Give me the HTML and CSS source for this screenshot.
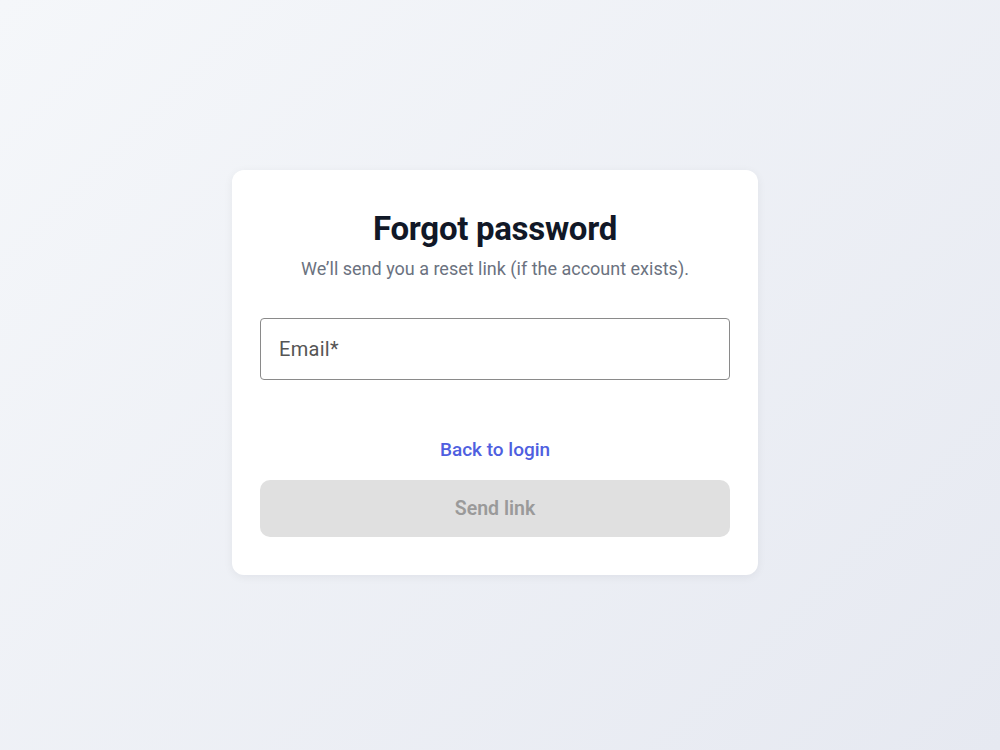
FILE: index.html
```html
<!DOCTYPE html>
<html lang="en">
<head>
  <meta charset="UTF-8" />
  <meta name="viewport" content="width=device-width, initial-scale=1.0"/>
  <title>Forgot password</title>
  <link rel="stylesheet" href="styles.css">
</head>
<body>
  <div class="card">
    <h1>Forgot password</h1>
    <p class="subtitle">We’ll send you a reset link (if the account exists).</p>

    <div class="field">
      <input type="email" id="email" placeholder="Email*" />
    </div>

    <a class="back" href="#">Back to login</a>

    <button class="send" disabled>Send link</button>
  </div>
</body>
</html>
```

FILE: styles.css
```css
:root {
  --card-bg: #ffffff;
  --title: #111827;
  --muted: #6b7280;
  --link: #4f5fe0;
  --input-border: #8a8a8a;
  --disabled-bg: #e0e0e0;
  --disabled-text: #9a9a9a;
}

body {
  font-family: Roboto, "Noto Sans", Arial, sans-serif;
  background: linear-gradient(135deg, #f5f7fa 0%, #e6e9f1 100%);
  margin: 0;
  padding: 0 10px 0 0;
  min-height: 100vh;
  display: flex;
  justify-content: center;
  align-items: flex-start;
}

.card {
  background-color: var(--card-bg);
  width: 526px;
  box-sizing: border-box;
  margin-top: 170px;
  padding: 40px 28px 38px;
  border-radius: 12px;
  box-shadow: 0 2px 10px rgba(15, 23, 42, 0.06);
  display: flex;
  flex-direction: column;
}

h1 {
  margin: 0;
  text-align: center;
  font-size: 33px;
  line-height: 38px;
  font-weight: 700;
  letter-spacing: -0.3px;
  color: var(--title);
}

.subtitle {
  margin: 10px 0 0;
  text-align: center;
  font-size: 18px;
  line-height: 22px;
  color: var(--muted);
}

.field {
  margin-top: 38px;
}

.field input {
  width: 100%;
  height: 62px;
  box-sizing: border-box;
  padding: 0 18px;
  border: 1px solid var(--input-border);
  border-radius: 4px;
  font-family: inherit;
  font-size: 20px;
  color: #333;
  background: #fff;
}

.field input::placeholder {
  color: #555;
  letter-spacing: 0.3px;
}

.back {
  margin-top: 58px;
  align-self: center;
  font-size: 19px;
  font-weight: 500;
  line-height: 24px;
  color: var(--link);
  text-decoration: none;
}

.send {
  margin-top: 18px;
  height: 57px;
  border: none;
  border-radius: 10px;
  background-color: var(--disabled-bg);
  color: var(--disabled-text);
  font-family: inherit;
  font-size: 19.5px;
  font-weight: 600;
}
```
